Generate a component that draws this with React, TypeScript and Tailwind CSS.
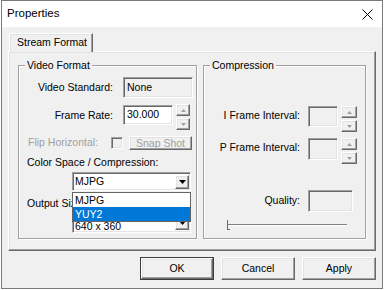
import React from 'react';

const sunken =
  'border border-t-[#a0a0a0] border-l-[#a0a0a0] border-b-white border-r-white shadow-[inset_1px_1px_0_#696969,inset_-1px_-1px_0_#e3e3e3]';
const raised =
  'border border-t-white border-l-white border-b-[#696969] border-r-[#696969] shadow-[inset_-1px_-1px_0_#a0a0a0,inset_1px_1px_0_#e3e3e3]';

function Arrow({ up, color = '#a0a0a0' }: { up?: boolean; color?: string }) {
  return (
    <svg width="5" height="3" viewBox="0 0 5 3">
      <path d={up ? 'M0 3L2.5 0L5 3Z' : 'M0 0L5 0L2.5 3Z'} fill={color} />
    </svg>
  );
}

function Spin({ className = '' }: { className?: string }) {
  return (
    <div className={`flex flex-col gap-[2px] ${className}`}>
      <div className={`h-[12px] bg-[#f0f0f0] flex items-center justify-center ${raised}`}>
        <Arrow up />
      </div>
      <div className={`h-[12px] bg-[#f0f0f0] flex items-center justify-center ${raised}`}>
        <Arrow />
      </div>
    </div>
  );
}

function Combo({
  value,
  className = '',
  textClass = '',
  children,
}: {
  value: string;
  className?: string;
  textClass?: string;
  children?: React.ReactNode;
}) {
  return (
    <div className={`relative bg-white flex items-center ${sunken} ${className}`}>
      <span className={`pl-[2px] flex-1 leading-none ${textClass}`}>{value}</span>
      <div className={`w-[14px] h-[14px] mr-[1px] bg-[#f0f0f0] flex items-center justify-center ${raised}`}>
        <svg width="7" height="4" viewBox="0 0 7 4">
          <path d="M0 0L7 0L3.5 4Z" fill="#000" />
        </svg>
      </div>
      {children}
    </div>
  );
}

function Group({ title, className = '', children }: { title: string; className?: string; children: React.ReactNode }) {
  return (
    <div className={`relative border border-[#a0a0a0] shadow-[inset_1px_1px_0_#fff,1px_1px_0_#fff] flex flex-col ${className}`}>
      <span className="absolute -top-[7px] left-[6px] px-[2px] bg-[#f0f0f0] leading-[13px]">{title}</span>
      {children}
    </div>
  );
}

export default function App() {
  return (
    <div className="w-[385px] h-[290px] bg-white font-['Liberation_Sans',Arial,sans-serif] text-[10.5px] text-black">
      <div className="ml-[1px] w-[382px] h-[289px] border border-[#7a7a7a] bg-[#f0f0f0] flex flex-col">
        {/* Title bar */}
        <div className="h-[26px] bg-white flex items-center justify-between pl-[5px] pr-[9px]">
          <span className="text-[11.5px] leading-none">Properties</span>
          <svg width="11" height="11" viewBox="0 0 11 11">
            <path d="M0.5 0.5L10.5 10.5M10.5 0.5L0.5 10.5" stroke="#000" strokeWidth="1" />
          </svg>
        </div>

        {/* Tab */}
        <div className="mt-[6px] ml-[7px] w-[84px] h-[19px] -mb-[1px] relative z-10 bg-[#f0f0f0] border-t border-l border-t-white border-l-white border-r border-r-[#696969] shadow-[inset_-1px_0_0_#a0a0a0,inset_1px_1px_0_#e3e3e3] flex items-center pl-[7px]">
          Stream Format
        </div>

        {/* Tab panel */}
        <div className="ml-[6px] w-[368px] h-[200px] border border-t-white border-l-white border-b-[#696969] border-r-[#696969] shadow-[inset_-1px_-1px_0_#a0a0a0,inset_1px_1px_0_#e3e3e3] flex gap-[6px] pl-[9px] pt-[13px]">
          {/* Video Format */}
          <Group title="Video Format" className="w-[179px] h-[174px]">
            <div className="mt-[11px] h-[21px] flex items-center">
              <span className="w-[94px] text-right">Video Standard:</span>
              <div className={`ml-[10px] w-[70px] h-[21px] flex items-center pl-[3px] bg-[#f0f0f0] ${sunken}`}>None</div>
            </div>
            <div className="mt-[6px] h-[26px] flex items-start">
              <span className="w-[94px] text-right mt-[1px] leading-[20px]">Frame Rate:</span>
              <div className={`ml-[10px] mt-[1px] w-[50px] h-[20px] flex items-center pl-[3px] bg-white ${sunken}`}>30.000</div>
              <Spin className="ml-[3px] w-[14px]" />
            </div>
            <div className="mt-[6px] h-[14px] flex items-center">
              <span className="ml-[9px] w-[83px] text-[#a0a0a0]">Flip Horizontal:</span>
              <div className={`w-[12px] h-[12px] bg-[#f0f0f0] ${sunken}`} />
              <div className={`ml-[6px] w-[63px] h-[14px] bg-[#f0f0f0] flex items-center justify-center text-[#a0a0a0] leading-none ${raised}`}>
                Snap Shot
              </div>
            </div>
            <span className="mt-[6px] ml-[8px] leading-[13px]">Color Space / Compression:</span>
            <Combo value="MJPG" className="mt-[3px] ml-[53px] w-[119px] h-[19px] z-10">
              <div className="absolute left-[-1px] top-[19px] w-[119px] border border-[#646464] bg-white">
                <div className="h-[14px] leading-[14px] pl-[2px]">MJPG</div>
                <div className="h-[14px] leading-[14px] pl-[2px] bg-[#0078d7] text-white">YUY2</div>
              </div>
            </Combo>
            <span className="mt-[6px] ml-[8px] w-[45px] overflow-hidden whitespace-nowrap leading-[13px]">Output Size:</span>
            <Combo value="640 x 360" className="mt-[2px] ml-[53px] w-[119px] h-[21px]" textClass="self-end mb-[1px]" />
          </Group>

          {/* Compression */}
          <Group title="Compression" className="w-[163px] h-[174px]">
            <div className="mt-[40px] flex items-start">
              <span className="w-[96px] text-right leading-[18px]">I Frame Interval:</span>
              <div className={`ml-[8px] w-[30px] h-[21px] bg-[#f0f0f0] ${sunken}`} />
              <Spin className="ml-[3px] w-[16px]" />
            </div>
            <div className="mt-[6px] flex items-start">
              <span className="w-[96px] text-right leading-[18px]">P Frame Interval:</span>
              <div className={`ml-[8px] w-[30px] h-[22px] bg-[#f0f0f0] ${sunken}`} />
              <Spin className="ml-[3px] w-[16px]" />
            </div>
            <div className="mt-[26px] flex items-start">
              <span className="w-[96px] text-right leading-[20px]">Quality:</span>
              <div className={`ml-[8px] w-[45px] h-[22px] bg-[#f0f0f0] ${sunken}`} />
            </div>
            <div className="mt-[7px] ml-[23px] w-[120px] h-[12px] relative">
              <div className="mt-[5px] h-[2px] border-t border-t-[#808080] border-b border-b-white" />
              <div className="absolute left-0 top-[1px] w-[3px] h-[10px] border-l border-b border-[#696969]" />
            </div>
          </Group>
        </div>

        {/* Buttons */}
        <div className="mt-[6px] pr-[6px] flex justify-end gap-[7px]">
          <div className="w-[74px] h-[23px] border border-[#3c3c3c] bg-[#f0f0f0] flex">
            <div className={`flex-1 flex items-center justify-center ${raised}`}>OK</div>
          </div>
          <div className={`w-[74px] h-[23px] bg-[#f0f0f0] flex items-center justify-center ${raised}`}>Cancel</div>
          <div className={`w-[74px] h-[23px] bg-[#f0f0f0] flex items-center justify-center ${raised}`}>Apply</div>
        </div>
      </div>
    </div>
  );
}
